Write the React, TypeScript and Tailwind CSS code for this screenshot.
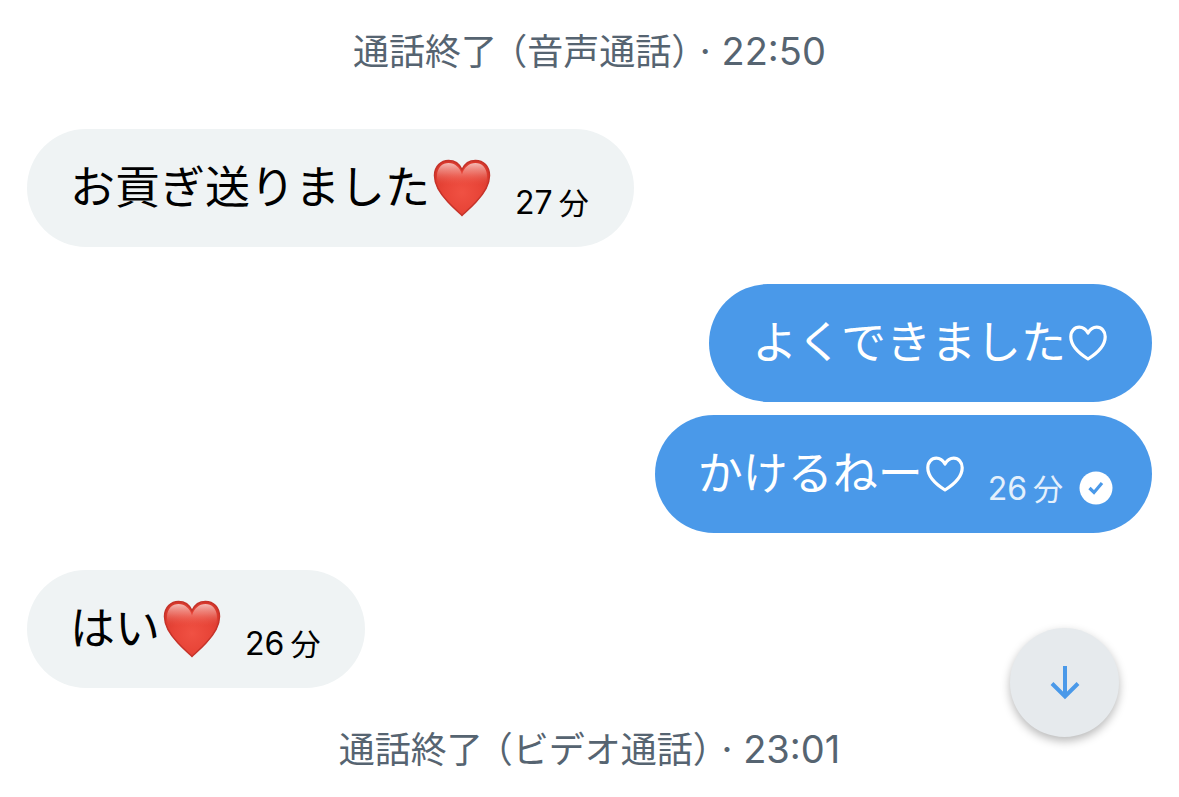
import { ReactNode, useId } from 'react';

interface Message {
  id: number;
  text: string;
  heart: 'red' | 'outline';
  time?: string;
  read?: boolean;
}

interface MessageGroup {
  id: number;
  from: 'me' | 'them';
  messages: Message[];
}

const groups: MessageGroup[] = [
  {
    id: 1,
    from: 'them',
    messages: [{ id: 1, text: 'お貢ぎ送りました', heart: 'red', time: '27' }],
  },
  {
    id: 2,
    from: 'me',
    messages: [
      { id: 2, text: 'よくできました', heart: 'outline' },
      { id: 3, text: 'かけるねー', heart: 'outline', time: '26', read: true },
    ],
  },
  {
    id: 3,
    from: 'them',
    messages: [{ id: 4, text: 'はい', heart: 'red', time: '26' }],
  },
];

function RedHeart() {
  const id = useId();
  const shape =
    'M29 56.500C26.500 54 21 49.500 15 43C6.500 34 1.500 26 1.500 16.500C1.500 7.500 8 1.500 15.500 1.500C21.500 1.500 26.500 5 29 10.500C31.500 5 36.500 1.500 42.500 1.500C50.500 1.500 56.500 7.500 56.500 16.500C56.500 26 51.500 34 43 43C37 49.500 31.500 54 29 56.500Z';

  return (
    <svg viewBox="0 0 58 58" className="ml-[3px] h-[58px] w-[58px] shrink-0" role="img" aria-label="❤️">
      <defs>
        <radialGradient id={`${id}-fill`} cx="0.5" cy="0.58" r="0.6">
          <stop offset="0" stopColor="#f05143" />
          <stop offset="0.55" stopColor="#e84538" />
          <stop offset="1" stopColor="#d9382c" />
        </radialGradient>
        <linearGradient id={`${id}-shine`} x1="0" y1="0" x2="0" y2="1">
          <stop offset="0" stopColor="#fbdcd8" stopOpacity="0.8" />
          <stop offset="0.45" stopColor="#f6a59c" stopOpacity="0.5" />
          <stop offset="1" stopColor="#ec5a4c" stopOpacity="0" />
        </linearGradient>
      </defs>
      <path d={shape} fill={`url(#${id}-fill)`} stroke="#c5332a" strokeWidth="1.500" />
      <path
        d="M4 17C4 8.500 9.500 4 15.500 4C22 4 27 8.500 29 15.500C31 8.500 36 4 42.500 4C48.500 4 54 8.500 54 17C54 20 53.500 23 52 26L6 26C4.500 23 4 20 4 17Z"
        fill={`url(#${id}-shine)`}
      />
    </svg>
  );
}

function OutlineHeart() {
  return (
    <svg
      viewBox="0 0 38 38"
      className="ml-[3px] h-[38px] w-[38px] shrink-0"
      fill="none"
      stroke="currentColor"
      strokeWidth="3.200"
      strokeLinejoin="round"
      role="img"
      aria-label="♡"
    >
      <path d="M19 35C11 30 1.800 22.500 1.800 12.800C1.800 7 5.500 3.200 10.300 3.200C14 3.200 17 5.500 19 9C21 5.500 24 3.200 27.700 3.200C32.500 3.200 36.200 7 36.200 12.800C36.200 22.500 27 30 19 35Z" />
    </svg>
  );
}

function ReadMark() {
  return (
    <svg viewBox="0 0 34 34" className="h-[34px] w-[34px]" role="img" aria-label="既読">
      <circle cx="17" cy="17" r="16.500" fill="#fff" />
      <path d="M10.500 17L15 21.500L23 12" fill="none" stroke="#4a99e9" strokeWidth="3.200" />
    </svg>
  );
}

function CallNotice({ kind, time }: { kind: string; time: string }) {
  return (
    <p className="text-center text-[36px] leading-[48px] text-[#566471]">
      通話終了
      <span className="ml-3 [font-feature-settings:'halt']">（</span>
      {kind}
      <span className="[font-feature-settings:'halt']">）</span>
      <span className="text-[38px]"> · {time}</span>
    </p>
  );
}

function Bubble({ mine, read, children }: { mine: boolean; read?: boolean; children: ReactNode }) {
  return (
    <div
      className={`flex items-end rounded-[59px] py-7 pl-[43px] ${read ? 'pr-[39px]' : 'pr-[45px]'} ${
        mine ? 'bg-[#4a99e9] text-white' : 'bg-[#eff3f4] text-black'
      }`}
    >
      {children}
    </div>
  );
}

function MessageBubble({ message, mine }: { message: Message; mine: boolean }) {
  return (
    <Bubble mine={mine} read={message.read}>
      <p className="flex items-center text-[45px] leading-[62px]">
        {message.text}
        {message.heart === 'red' ? <RedHeart /> : <OutlineHeart />}
      </p>
      {message.time && (
        <time
          className={`ml-6 flex items-center gap-1.5 text-[32px] leading-[32px] ${
            mine ? 'text-[#e4f0fc]' : ''
          }`}
        >
          <span>{message.time}</span>
          <span className="text-[30px]">分</span>
        </time>
      )}
      {message.read && (
        <span className="ml-4">
          <ReadMark />
        </span>
      )}
    </Bubble>
  );
}

export default function App() {
  return (
    <main className="relative flex min-h-screen flex-col gap-[37px] bg-white px-[27px] pt-[27px] font-['Inter','Noto_Sans_CJK_JP',sans-serif]">
      <div className="pb-4">
        <CallNotice kind="音声通話" time="22:50" />
      </div>

      {groups.map((group) => (
        <section
          key={group.id}
          className={`flex flex-col gap-[13px] ${group.from === 'me' ? 'items-end' : 'items-start'}`}
        >
          {group.messages.map((message) => (
            <MessageBubble key={message.id} message={message} mine={group.from === 'me'} />
          ))}
        </section>
      ))}

      <CallNotice kind="ビデオ通話" time="23:01" />

      {/* Jump to latest */}
      <button
        type="button"
        aria-label="最新のメッセージへ"
        className="fixed bottom-[60px] right-[60px] flex h-[109px] w-[109px] items-center justify-center rounded-full bg-[#e6eaed] shadow-[0_4px_10px_rgba(0,0,0,0.28)]"
      >
        <svg viewBox="0 0 32 36" className="h-9 w-8" fill="none" stroke="#4a99e9" strokeWidth="4">
          <path d="M16 1V31M3 18.500L16 31.500L29 18.500" />
        </svg>
      </button>
    </main>
  );
}
